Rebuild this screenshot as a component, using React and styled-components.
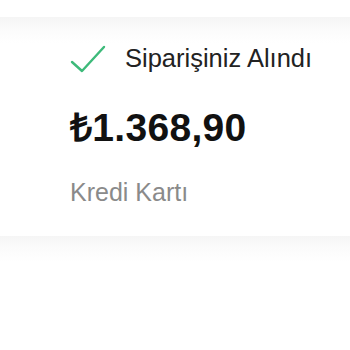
import React from "react";
import styled, { createGlobalStyle } from "styled-components";

const GlobalStyle = createGlobalStyle`
  html, body {
    margin: 0;
    padding: 0;
    background: #fff;
    font-family: "Liberation Sans", Arial, sans-serif;
  }
`;

const Page = styled.div`
  width: 350px;
  height: 350px;
  overflow: hidden;
  padding-top: 17px;
  box-sizing: border-box;
`;

const Section = styled.section`
  background: linear-gradient(#f5f5f5 0px, #fbfbfb 12px, #fff 26px);
  padding: ${(p) => p.$pad || "0"};
  height: ${(p) => p.$height || "auto"};
  box-sizing: border-box;
`;

const Status = styled.div`
  display: flex;
  align-items: center;
  gap: 19px;
  padding-left: 70px;
`;

const StatusText = styled.span`
  font-size: 25.5px;
  color: #222;
`;

const Price = styled.div`
  font-size: 39px;
  font-weight: 700;
  letter-spacing: 0.3px;
  color: #111;
  padding-left: 70px;
  margin-top: 35px;
  line-height: 1;
`;

const Method = styled.div`
  font-size: 25px;
  color: #8a8a8a;
  padding-left: 70px;
  margin-top: 33px;
  line-height: 1;
`;

function CheckIcon() {
  return (
    <svg width="36" height="28" viewBox="0 0 36 28" fill="none">
      <path d="M2 17 L12 26 L34 2" stroke="#3dba7a" strokeWidth="2.4" strokeLinecap="round" strokeLinejoin="round" />
    </svg>
  );
}

export default function App() {
  return (
    <Page>
      <GlobalStyle />
      <Section $pad="27px 0 0" $height="219px">
        <Status>
          <CheckIcon />
          <StatusText>Siparişiniz Alındı</StatusText>
        </Status>
        <Price>₺1.368,90</Price>
        <Method>Kredi Kartı</Method>
      </Section>
      <Section $height="120px" />
    </Page>
  );
}
